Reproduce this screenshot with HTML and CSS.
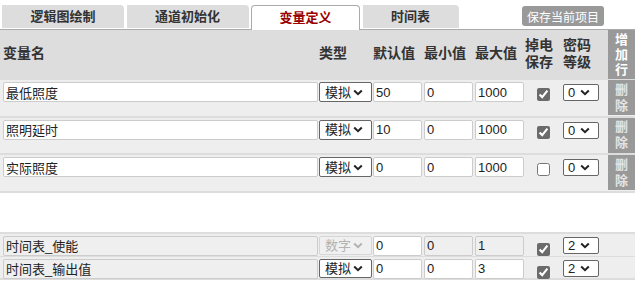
FILE: index.html
```html
<!DOCTYPE html>
<html lang="zh-CN">
<head>
  <meta charset="UTF-8">
  <title>变量定义</title>
  <link rel="stylesheet" href="styles.css">
</head>
<body>

  <div class="tabbar">
    <div class="tab">逻辑图绘制</div>
    <div class="tab">通道初始化</div>
    <div class="tab active">变量定义</div>
    <div class="tab">时间表</div>
    <button class="save-btn">保存当前项目</button>
  </div>

  <div class="row head">
    <div class="label first">变量名</div>
    <div class="label">类型</div>
    <div class="label">默认值</div>
    <div class="label">最小值</div>
    <div class="label">最大值</div>
    <div class="label">掉电<br>保存</div>
    <div class="label">密码<br>等级</div>
    <button class="side-btn add">增<br>加<br>行</button>
  </div>

  <div class="var-list">
    <div class="row var">
      <input class="field name" type="text" value="最低照度">
      <select class="type"><option>模拟</option><option>数字</option></select>
      <input class="field num" type="text" value="50">
      <input class="field num" type="text" value="0">
      <input class="field num" type="text" value="1000">
      <input class="keep" type="checkbox" checked>
      <select class="level"><option>0</option><option>1</option><option>2</option></select>
      <button class="side-btn del">删<br>除</button>
    </div>
    <div class="row var">
      <input class="field name" type="text" value="照明延时">
      <select class="type"><option>模拟</option><option>数字</option></select>
      <input class="field num" type="text" value="10">
      <input class="field num" type="text" value="0">
      <input class="field num" type="text" value="1000">
      <input class="keep" type="checkbox" checked>
      <select class="level"><option>0</option><option>1</option><option>2</option></select>
      <button class="side-btn del">删<br>除</button>
    </div>
    <div class="row var">
      <input class="field name" type="text" value="实际照度">
      <select class="type"><option>模拟</option><option>数字</option></select>
      <input class="field num" type="text" value="0">
      <input class="field num" type="text" value="0">
      <input class="field num" type="text" value="1000">
      <input class="keep" type="checkbox">
      <select class="level"><option>0</option><option>1</option><option>2</option></select>
      <button class="side-btn del">删<br>除</button>
    </div>
  </div>

  <div class="timer-list">
    <div class="row timer">
      <input class="field name ro" type="text" value="时间表_使能" readonly>
      <select class="type" disabled><option>数字</option></select>
      <input class="field num" type="text" value="0">
      <input class="field num ro" type="text" value="0" readonly>
      <input class="field num ro" type="text" value="1" readonly>
      <input class="keep" type="checkbox" checked>
      <select class="level"><option>0</option><option>1</option><option selected>2</option></select>
    </div>
    <div class="row timer">
      <input class="field name ro" type="text" value="时间表_输出值" readonly>
      <select class="type"><option>模拟</option><option>数字</option></select>
      <input class="field num" type="text" value="0">
      <input class="field num" type="text" value="0">
      <input class="field num" type="text" value="3">
      <input class="keep" type="checkbox" checked>
      <select class="level"><option>0</option><option>1</option><option selected>2</option></select>
    </div>
  </div>

</body>
</html>
```

FILE: styles.css
```css
body {
  margin: 0;
  background: #fff;
  font-family: "Liberation Sans", "Noto Sans CJK SC", sans-serif;
  color: #333;
}

/* tabs */
.tabbar {
  display: flex;
  align-items: flex-end;
  height: 29px;
  padding-left: 2px;
  border-bottom: 1px solid #aaa;
}

.tab {
  height: 23px;
  line-height: 23px;
  margin: 0 2.5px 1px 0;
  padding: 0 28.5px;
  background: #ddd;
  border-top-right-radius: 4px;
  font-size: 13px;
  font-weight: bold;
  color: #333;
}

.tab.active {
  height: 24px;
  margin-bottom: -1px;
  padding: 0 27.5px;
  background: #fff;
  border: 1px solid #aaa;
  border-bottom: none;
  border-radius: 4px 4px 0 0;
  color: #990000;
}

.save-btn {
  margin: 0 31px 3px auto;
  height: 20px;
  padding: 0 5px;
  border: none;
  border-radius: 3px;
  background: #999;
  color: #fff;
  font-family: inherit;
  font-size: 12px;
}

/* table rows */
.row {
  display: grid;
  grid-template-columns: 319px 54px 51px 51px 50px 38px 45px 27px;
  align-items: start;
  box-sizing: border-box;
}

.head {
  height: 50px;
  background: #ddd;
  align-items: center;
}

.label {
  padding-bottom: 3px;
  font-size: 14px;
  font-weight: bold;
  line-height: 17px;
  color: #333;
}

.label.first {
  padding-left: 3px;
}

.var {
  height: 37.5px;
  background: #eee;
  border-bottom: 2px solid #ddd;
}

.timer-list {
  margin-top: 39px;
  border-top: 2px solid #ddd;
}

.timer {
  height: 23px;
  background: #eee;
  border-bottom: 1px solid #ddd;
}

.timer:last-child {
  border-bottom-width: 2px;
}

.field {
  box-sizing: border-box;
  height: 20px;
  margin-top: 2px;
  padding: 0 2px;
  border: 1px solid #ccc;
  border-radius: 2px;
  background: #fff;
  font-family: inherit;
  font-size: 13px;
  color: #222;
  outline: none;
}

.field.name {
  width: 315px;
  margin-left: 3px;
}

.field.num {
  width: 49px;
}

.field.ro {
  background: #efefef;
}

/* selects with a drawn chevron */
.type,
.level {
  appearance: none;
  box-sizing: border-box;
  margin-top: 2px;
  border: 1px solid #666;
  border-radius: 2px;
  background: #fff url("data:image/svg+xml,%3Csvg xmlns='http://www.w3.org/2000/svg' width='10' height='7'%3E%3Cpath d='M1.2 1.5L5 5.2L8.8 1.5' fill='none' stroke='%23222' stroke-width='2'/%3E%3C/svg%3E") no-repeat;
  font-family: inherit;
  font-size: 13px;
  color: #222;
  outline: none;
}

.type {
  width: 53px;
  height: 20px;
  padding: 0 0 0 5px;
  background-position: right 8px center;
}

.type:disabled {
  border-color: #ccc;
  background-color: #f2f2f2;
  background-image: url("data:image/svg+xml,%3Csvg xmlns='http://www.w3.org/2000/svg' width='10' height='7'%3E%3Cpath d='M1.2 1.5L5 5.2L8.8 1.5' fill='none' stroke='%23999' stroke-width='2'/%3E%3C/svg%3E");
  color: #999;
}

.level {
  width: 36px;
  height: 17px;
  margin-top: 4px;
  padding: 0 0 0 4px;
  background-position: right 8px center;
}

.timer .level {
  margin-top: 3px;
}

.timer .type {
  height: 19px;
}

.keep {
  width: 13px;
  height: 13px;
  margin: 8px 0 0 12px;
  accent-color: #6b6b6b;
}

.timer .keep {
  margin-top: 9px;
}

.side-btn {
  width: 27px;
  padding: 0;
  border: none;
  background: #999;
  font-family: inherit;
  font-size: 13px;
  font-weight: bold;
}

.side-btn.add {
  align-self: start;
  height: 49px;
  line-height: 15px;
  color: #fff;
}

.side-btn.del {
  height: 35px;
  line-height: 16px;
  color: #e4e4e4;
}
```
